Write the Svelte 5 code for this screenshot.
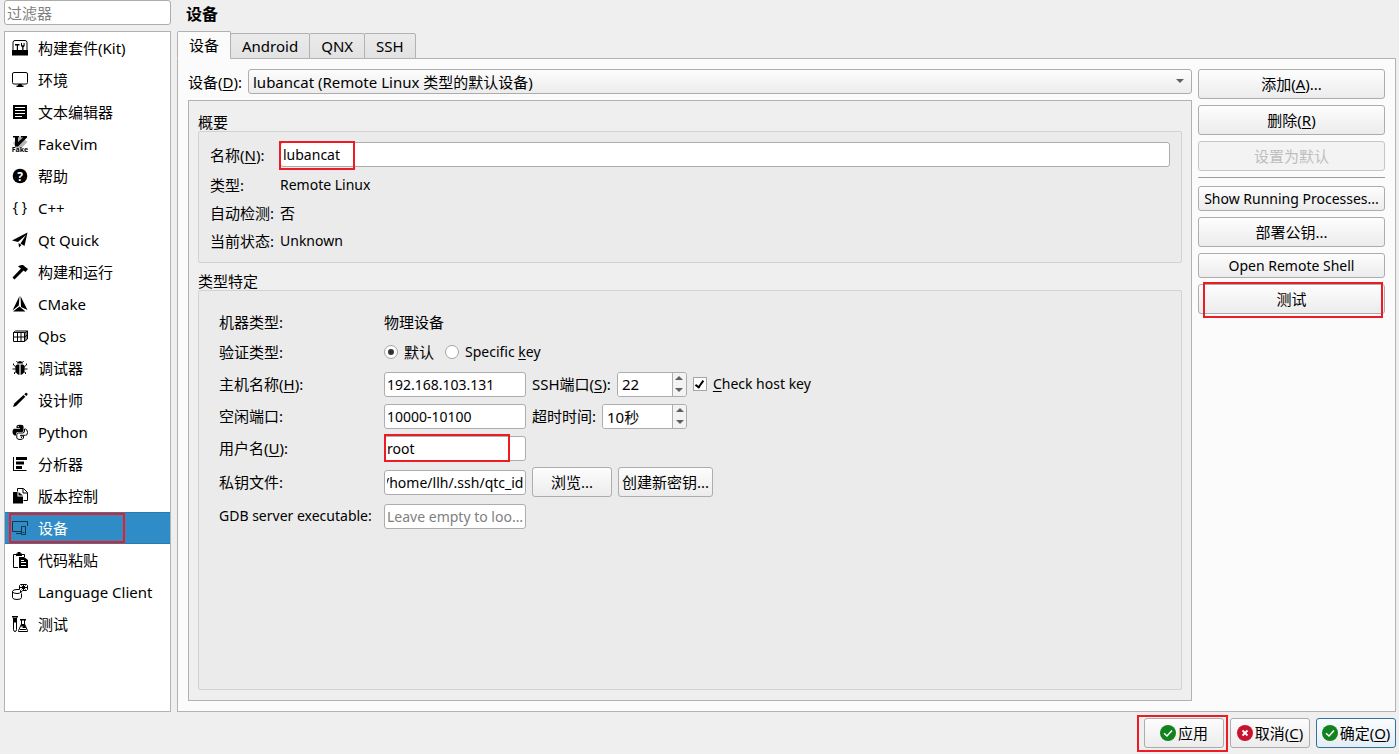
<script lang="ts">
  import { onMount } from 'svelte'

  const categories = [
    { icon: 'kit', label: '构建套件(Kit)' },
    { icon: 'monitor', label: '环境' },
    { icon: 'text', label: '文本编辑器' },
    { icon: 'vim', label: 'FakeVim' },
    { icon: 'help', label: '帮助' },
    { icon: 'braces', label: 'C++' },
    { icon: 'plane', label: 'Qt Quick' },
    { icon: 'hammer', label: '构建和运行' },
    { icon: 'cmake', label: 'CMake' },
    { icon: 'qbs', label: 'Qbs' },
    { icon: 'bug', label: '调试器' },
    { icon: 'pencil', label: '设计师' },
    { icon: 'python', label: 'Python' },
    { icon: 'analyzer', label: '分析器' },
    { icon: 'pages', label: '版本控制' },
    { icon: 'devices', label: '设备' },
    { icon: 'clipboard', label: '代码粘贴' },
    { icon: 'client', label: 'Language Client' },
    { icon: 'tubes', label: '测试' },
  ]
  const tabs = ['设备', 'Android', 'QNX', 'SSH']

  let category = $state('devices')
  let tab = $state('设备')
  let filter = $state('')
  let name = $state('lubancat')
  let auth = $state('default')
  let host = $state('192.168.103.131')
  let sshPort = $state(22)
  let checkHostKey = $state(true)
  let freePorts = $state('10000-10100')
  let timeout = $state(10)
  let user = $state('root')
  let keyFile = $state('/home/llh/.ssh/qtc_id')
  let gdbServer = $state('')

  let keyInput: HTMLInputElement

  const visible = $derived(
    categories.filter((c) => c.label.toLowerCase().includes(filter.toLowerCase()))
  )

  // show the file name end of a long path
  onMount(() => {
    keyInput.scrollLeft = keyInput.scrollWidth
  })
</script>

{#snippet icon(id: string)}
  <svg class="icon" viewBox="0 0 16 16" width="16" height="16" aria-hidden="true">
    {#if id === 'kit'}
      <path d="M1 10V2.500Q1 .5 3 .5h10q2 0 2 2V10" fill="none" stroke="currentColor" />
      <path d="M0 10h16v5.500H0zM3 4h4.500v1.400H6V10H4.800V5.400H3zM9 3h1v2.200h1.600V3h1v3l-1.100 1.200V10h-1.300V7.200L9 6z" />
    {:else if id === 'monitor'}
      <rect x=".5" y=".5" width="15" height="11.500" rx="1.500" fill="none" stroke="currentColor" />
      <path d="M6.500 12h3l.5 1.500h1.500V15h-7v-1.500H6z" />
    {:else if id === 'text'}
      <path d="M1 1h14v14H1z" />
      <path d="M3 3.500h10M3 6.500h10M3 9.500h10M3 12.500h7" stroke="#fff" />
    {:else if id === 'vim'}
      <path d="M8 0l7.500 6-6 6H4L1 7z" fill="#b5b5b5" />
      <path d="M1 0h6v1.500H6V6l5-4.500H9V0h6v1.500L6 10.500H3v-9H1z" />
      <text x="8" y="15.500" text-anchor="middle" font-size="7" font-weight="bold">Fake</text>
    {:else if id === 'help'}
      <circle cx="8" cy="8" r="7.300" />
      <text x="8" y="12.500" text-anchor="middle" font-size="12" font-weight="bold" fill="#fff">?</text>
    {:else if id === 'braces'}
      <text x="8" y="12" text-anchor="middle" font-size="14">{'{ }'}</text>
    {:else if id === 'plane'}
      <path d="M15.500.5L12.500 14 8.500 11.500 14 3 6 10 0 8.500zM6.500 11l3 2-2.500 2.500z" />
    {:else if id === 'hammer'}
      <path d="M6 2.500Q8 .5 11 1l3 2.500 2 1.500-2.500 3-2-1.500L2.500 15.500.500 13.500 9 4.500z" />
    {:else if id === 'cmake'}
      <path d="M7.500 0L6.800 9.500.5 14.500zM8.500 0l7 14L9 11zM1 15.500l6.500-5 6 5z" />
    {:else if id === 'qbs'}
      <path d="M1.500 4.500h11v9h-11zM5.500 4.500v9M9 4.500v9M1.500 9h11M1.500 4.500l2-1.500h12v8l-3 2.500" fill="none" stroke="currentColor" />
      <path d="M12.500 5l3-2M12.500 9l3-2M14 4v8" fill="none" stroke="currentColor" />
    {:else if id === 'bug'}
      <path d="M5 3.500Q5.500 1 8 1t3 2.500zM7.400 4.500V15Q3.300 14 3.300 9V6L5 4.500zM8.600 4.500V15q4.100-1 4.100-6V6L11 4.500z" />
      <path d="M5.500 2.500L4.500 1M10.500 2.500L11.500 1M3.500 6.500L1.500 5V3.500M12.500 6.500l2-1.500V3.500M3.500 9H.5M12.500 9h3M4.500 11.500L2.500 12.500V14M11.500 11.500l2 1V14" fill="none" stroke="currentColor" />
    {:else if id === 'pencil'}
      <path d="M1 15l1.200-3.500L11.500 3l1.800 1.800L4 14zM12.300 2.200L13.500 1q1-.5 1.700.2t.2 1.700L14.200 4z" />
    {:else if id === 'python'}
      <path d="M4.500 4V2Q5 .8 8 .8T11.500 2v4.500q0 1.500-1.500 1.500H6Q4 8 4 10v1.500H2.500Q.5 11 .5 8T2.500 4.800H8V4z" />
      <circle cx="6.200" cy="2.600" r=".7" fill="#fff" />
      <path d="M11.500 12v2q-.5 1.500-3.500 1.500T4.800 14v-3.500Q5 9 6.500 9h4q2 0 2-2V5h1q2 .5 2 3.500t-2 2.800H8.500v.7z" fill="none" stroke="currentColor" />
      <circle cx="9.500" cy="13.600" r=".7" />
    {:else if id === 'analyzer'}
      <path d="M1 1h1v13h12.500v1H1zM4 1h11v3H4zM4 5.500h8v3H4zM4 10h6v3H4z" />
    {:else if id === 'pages'}
      <path d="M1 4h4.500v4.500H11v7H1zM6.500 4L11 7.500H6.500z" />
      <path d="M5.500 3.500v-3h6l4 4v8H11.500M11 1v4h4.500" fill="none" stroke="currentColor" />
    {:else if id === 'devices'}
      <path d="M9 11.500H.5v-10h15V6M4 13.500h5M9.500 6.500h4v8h-4zM10.500 12.500h2" fill="none" stroke="currentColor" />
    {:else if id === 'clipboard'}
      <path d="M6 15.500H1.500v-13h11V5" fill="none" stroke="currentColor" />
      <path d="M4 1.500h1.500V0h3v1.500H10V4H4zM7 5h5l4 3v8H7z" />
      <path d="M9 8.500h3M9 10.500h5M9 13.500h5" stroke="#fff" />
    {:else if id === 'client'}
      <path d="M.5 7.500v6q0 2 4.500 2t4.500-2V9.500M.5 7.500Q.5 5.500 5 5.500h2M.5 7.500Q.5 9.500 5 9.500q3 0 3.500-1" fill="none" stroke="currentColor" />
      <path d="M8.500.5h6l1 1v4l-1 1h-4L8.500 9V6.500l-1-1v-4z" fill="none" stroke="currentColor" />
      <path d="M11.500 1v5.500M8 3.500h7M9.500 1.500l4 4M13.500 1.500l-4 4" fill="none" stroke="currentColor" />
    {:else if id === 'tubes'}
      <path d="M1.500 1.500v12q0 2 1.500 2t1.500-2v-12M9.500 4v4L6.500 14.500v1h9v-1L12.500 8V4" fill="none" stroke="currentColor" />
      <path d="M0 0h6v1.500H0zM2 2h2v4.500H2zM8 3h6v1.500H8zM9.500 8h3l1.500 4h-4l1.500-1.500H8.500zM8 13h6l.5 1H7.500z" />
    {/if}
  </svg>
{/snippet}

{#snippet badge(kind: string)}
  <svg class="badge" viewBox="0 0 16 16" width="16" height="16" aria-hidden="true">
    <circle cx="8" cy="8" r="8" fill={kind === 'ok' ? '#12821f' : '#c6142f'} />
    {#if kind === 'ok'}
      <path d="M4 8.200l3 2.800 5-5.500" fill="none" stroke="#fff" stroke-width="1.500" />
    {:else}
      <path d="M5.500 5.500l5 5M10.500 5.500l-5 5" fill="none" stroke="#fff" stroke-width="1.800" />
    {/if}
  </svg>
{/snippet}

{#snippet steppers(step: (n: number) => void)}
  <span class="steppers">
    <button type="button" aria-label="+1" onclick={() => step(1)}></button>
    <button type="button" aria-label="-1" class="down" onclick={() => step(-1)}></button>
  </span>
{/snippet}

<div class="dialog">
  <div class="content">
    <aside>
      <input class="filter" type="text" placeholder="过滤器" aria-label="过滤器" bind:value={filter} />
      <ul>
        {#each visible as item (item.icon)}
          <li>
            <button
              type="button"
              class="category"
              class:selected={category === item.icon}
              onclick={() => (category = item.icon)}
            >
              {@render icon(item.icon)}
              <span>{item.label}</span>
            </button>
          </li>
        {/each}
      </ul>
    </aside>

    <main>
      <h1>设备</h1>
      <div class="tabs" role="tablist">
        {#each tabs as t (t)}
          <button type="button" role="tab" aria-selected={tab === t} onclick={() => (tab = t)}>{t}</button>
        {/each}
      </div>

      <div class="page">
        <div class="device">
          <div class="picker">
            <label for="device">设备(<u>D</u>):</label>
            <span class="combo">
              <select id="device">
                <option>lubancat (Remote Linux 类型的默认设备)</option>
              </select>
            </span>
          </div>

          <div class="frame">
            <h2>概要</h2>
            <section class="group summary">
              <label for="name">名称(<u>N</u>):</label>
              <span class="mark name"><input id="name" type="text" bind:value={name} /></span>
              <span>类型:</span>
              <span class="latin">Remote Linux</span>
              <span>自动检测:</span>
              <span>否</span>
              <span>当前状态:</span>
              <span class="latin">Unknown</span>
            </section>

            <h2>类型特定</h2>
            <section class="group specific">
              <span>机器类型:</span>
              <span>物理设备</span>

              <span>验证类型:</span>
              <div class="line radios">
                <label><input type="radio" name="auth" value="default" bind:group={auth} />默认</label>
                <label class="latin"><input type="radio" name="auth" value="key" bind:group={auth} /><span>Specific <u>k</u>ey</span></label>
              </div>

              <label for="host">主机名称(<u>H</u>):</label>
              <div class="line">
                <input id="host" type="text" bind:value={host} />
                <label for="port">SSH端口(<u>S</u>):</label>
                <span class="spin port">
                  <input id="port" type="text" bind:value={sshPort} />
                  {@render steppers((n) => (sshPort = Number(sshPort) + n))}
                </span>
                <label class="check latin"><input type="checkbox" bind:checked={checkHostKey} /><span><u>C</u>heck host key</span></label>
              </div>

              <label for="ports">空闲端口:</label>
              <div class="line">
                <input id="ports" type="text" bind:value={freePorts} />
                <label for="timeout">超时时间:</label>
                <span class="spin timeout">
                  <input id="timeout" type="text" value={`${timeout}秒`} />
                  {@render steppers((n) => (timeout += n))}
                </span>
              </div>

              <label for="user">用户名(<u>U</u>):</label>
              <div class="line">
                <span class="mark user"><input id="user" type="text" bind:value={user} /></span>
              </div>

              <label for="key">私钥文件:</label>
              <div class="line">
                <input id="key" type="text" bind:value={keyFile} bind:this={keyInput} />
                <button type="button" class="push browse">浏览...</button>
                <button type="button" class="push create">创建新密钥...</button>
              </div>

              <label class="latin" for="gdb">GDB server executable:</label>
              <div class="line">
                <input id="gdb" class="latin" type="text" placeholder="Leave empty to look up executable in $PATH" bind:value={gdbServer} />
              </div>
            </section>
          </div>
        </div>

        <div class="actions">
          <button type="button" class="push"><span>添加(<u>A</u>)...</span></button>
          <button type="button" class="push"><span>删除(<u>R</u>)</span></button>
          <button type="button" class="push" disabled>设置为默认</button>
          <hr />
          <button type="button" class="push short latin">Show Running Processes...</button>
          <button type="button" class="push">部署公钥...</button>
          <button type="button" class="push short latin">Open Remote Shell</button>
          <span class="mark test"><button type="button" class="push">测试</button></span>
        </div>
      </div>
    </main>
  </div>

  <footer>
    <span class="mark apply"><button type="button" class="push">{@render badge('ok')}应用</button></span>
    <button type="button" class="push">{@render badge('cancel')}<span>取消(<u>C</u>)</span></button>
    <button type="button" class="push default">{@render badge('ok')}<span>确定(<u>O</u>)</span></button>
  </footer>
</div>

<style>
  :global(body) {
    background: #efefef;
  }

  .dialog {
    display: flex;
    flex-direction: column;
    box-sizing: border-box;
    min-height: 100vh;
    padding: 0 3px 6px 4px;
    font: 15px/22px 'Noto Sans', 'Noto Sans CJK SC', sans-serif;
    color: #000;
  }

  .dialog :is(input, select, button) {
    box-sizing: border-box;
    margin: 0;
    font: inherit;
    color: inherit;
  }

  .dialog .latin,
  .dialog .line > input,
  .dialog .mark input {
    font-size: 14px;
  }

  u {
    text-underline-offset: 2px;
  }

  .content {
    flex: 1;
    display: flex;
    gap: 6px;
  }

  aside {
    flex: 0 0 167px;
    min-width: 0;
    display: flex;
    flex-direction: column;
    gap: 6px;
  }

  input[type='text'] {
    min-width: 0;
    height: 25px;
    padding: 0 2px;
    border: 1px solid #adadad;
    border-radius: 3px;
    background: #fff;
    outline: none;
  }

  input:placeholder-shown {
    text-overflow: ellipsis;
  }

  input::placeholder {
    color: #808080;
    opacity: 1;
  }

  ul {
    flex: 1;
    margin: 0;
    padding: 0;
    border: 1px solid #b2b2b2;
    background: #fff;
    list-style: none;
  }

  .category {
    position: relative;
    display: flex;
    align-items: center;
    gap: 10px;
    width: 100%;
    height: 32px;
    padding: 0 7px;
    border: 0;
    background: none;
    text-align: left;
    white-space: nowrap;
  }

  .dialog .category.selected {
    background: #308cc6;
    box-shadow: inset 0 1px #2a7bae, inset 0 -1px #2a7bae;
    color: #fff;
  }

  .category.selected .icon {
    color: #12354b;
  }

  .icon {
    flex: none;
    fill: currentColor;
    overflow: visible;
  }

  /* red call-outs */
  .mark {
    position: relative;
    display: flex;
  }

  .mark::after,
  .category.selected::after {
    content: '';
    position: absolute;
    box-sizing: border-box;
    border: 2px solid #ed1c24;
    pointer-events: none;
  }

  .category.selected::after {
    inset: 1px 45px 1px 4px;
  }

  .mark.name::after {
    width: 76px;
    inset: -1px auto -3px -1px;
  }

  .mark.user::after {
    inset: -2px 16px -1px 0;
  }

  .mark.test::after {
    inset: -2px 2px -4px 5px;
  }

  .mark.apply::after {
    inset: -3px -4px -4px -7px;
  }

  main {
    flex: 1;
    min-width: 0;
    display: flex;
    flex-direction: column;
  }

  h1 {
    margin: 0;
    padding: 3px 10px 6px 9px;
    font-size: 16px;
    line-height: 22px;
  }

  .tabs {
    position: relative;
    display: flex;
    align-items: flex-end;
    height: 28px;
    margin-bottom: -1px;
  }

  .tabs button {
    height: 26px;
    margin-left: -1px;
    padding: 0 11px;
    border: 1px solid #b2b2b2;
    border-radius: 2px 2px 0 0;
    background: linear-gradient(#ebebeb, #e2e2e2);
  }

  .tabs button[aria-selected='true'] {
    height: 28px;
    margin-left: 0;
    border-bottom-color: #fbfbfb;
    background: #fbfbfb;
  }

  .page {
    flex: 1;
    display: flex;
    gap: 6px;
    padding: 10px;
    border: 1px solid #b2b2b2;
    background: #fbfbfb;
  }

  .device {
    flex: 1;
    min-width: 0;
    display: flex;
    flex-direction: column;
    gap: 6px;
  }

  .picker {
    display: flex;
    align-items: center;
    gap: 6px;
  }

  .combo {
    position: relative;
    flex: 1;
    display: flex;
  }

  .combo::after {
    content: '';
    position: absolute;
    top: 10px;
    right: 8px;
    border: 4px solid transparent;
    border-top: 4px solid #606060;
    border-bottom: 0;
    pointer-events: none;
  }

  select {
    flex: 1;
    height: 25px;
    padding: 0 4px;
    border: 1px solid #adadad;
    border-radius: 3px;
    background: linear-gradient(#fdfdfd, #ececec);
    appearance: none;
  }

  .frame {
    flex: 1;
    display: flex;
    flex-direction: column;
    padding: 10px 9px;
    border: 1px solid #b2b2b2;
    background: #efefef;
  }

  h2 {
    height: 20px;
    margin: 0;
    font-size: 15px;
    font-weight: normal;
    line-height: 22px;
  }

  .group {
    display: grid;
    gap: 6px;
    align-items: center;
    border: 1px solid #d2d2d2;
    border-radius: 2px;
    background: #ebebeb;
    white-space: nowrap;
  }

  .summary {
    grid-template: 25px 23px 22px 22px / 64px 1fr;
    margin-bottom: 7px;
    padding: 10px 11px;
  }

  .summary input {
    flex: 1;
  }

  .specific {
    flex: 1;
    grid-template: 22px 26px 26px 26px 26px 30px 26px / 159px 1fr;
    align-content: start;
    padding: 20px;
  }

  .line {
    display: flex;
    align-items: center;
    gap: 6px;
  }

  .line input[type='text'] {
    width: 142px;
  }

  .radios {
    gap: 11px;
  }

  .radios label,
  .check {
    display: flex;
    align-items: center;
    gap: 6px;
  }

  input[type='radio'],
  input[type='checkbox'] {
    display: grid;
    place-items: center;
    width: 14px;
    height: 14px;
    border: 1px solid #a5a5a5;
    background: #fff;
    appearance: none;
  }

  input[type='radio'] {
    border-radius: 50%;
  }

  input[type='radio']:checked::before {
    content: '';
    width: 6px;
    height: 6px;
    border-radius: 50%;
    background: #333;
  }

  input[type='checkbox']:checked::before {
    content: '';
    width: 3px;
    height: 7px;
    margin-bottom: 2px;
    border: solid #000;
    border-width: 0 2px 2px 0;
    transform: rotate(35deg);
  }

  .spin {
    display: flex;
    box-sizing: border-box;
    height: 25px;
    border: 1px solid #adadad;
    border-radius: 3px;
    overflow: hidden;
  }

  .port {
    width: 70px;
  }

  .timeout {
    width: 85px;
  }

  .dialog .spin input {
    flex: 1;
    width: 0;
    height: 23px;
    padding: 0 4px;
    border: 0;
    border-radius: 0;
  }

  .steppers {
    display: flex;
    flex-direction: column;
    width: 13px;
    border-left: 1px solid #adadad;
    background: #f3f3f3;
  }

  .steppers button {
    flex: 1;
    display: grid;
    place-items: center;
    padding: 0;
    border: 0;
    background: none;
  }

  .steppers button::before {
    content: '';
    border: 4px solid transparent;
    border-top: 0;
    border-bottom: 4px solid #606060;
  }

  .steppers .down::before {
    border-top: 4px solid #606060;
    border-bottom: 0;
  }

  .push {
    display: flex;
    align-items: center;
    justify-content: center;
    gap: 2px;
    height: 30px;
    padding: 0 3px;
    border: 1px solid #adadad;
    border-radius: 3px;
    background: linear-gradient(#fdfdfd, #ececec);
    white-space: nowrap;
  }

  .push.short {
    height: 25px;
  }

  .dialog .push:disabled {
    border-color: #c6c6c6;
    background: #f3f3f3;
    color: #bebebe;
  }

  .browse {
    width: 80px;
  }

  .create {
    width: 95px;
  }

  .actions {
    flex: 0 0 187px;
    min-width: 0;
    display: flex;
    flex-direction: column;
    gap: 6px;
  }

  .actions .mark .push {
    flex: 1;
  }

  hr {
    width: 100%;
    height: 3px;
    margin: 0;
    box-sizing: border-box;
    border: 0;
    border-top: 1px solid #9e9e9e;
  }

  footer {
    display: flex;
    justify-content: flex-end;
    gap: 6px;
    padding-top: 6px;
  }

  footer .push {
    width: 80px;
  }

  .push.default {
    border-color: #2f7399;
    background: linear-gradient(#fafcfe, #e4edf4);
  }
</style>
